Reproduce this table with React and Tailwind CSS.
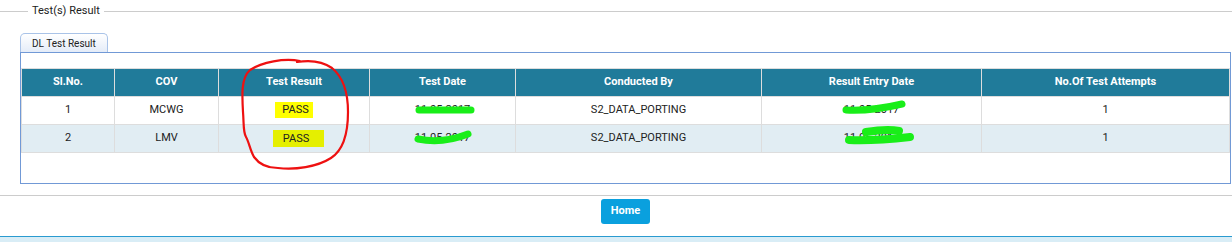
import React from 'react';

const cols = [
  { label: 'Sl.No.', w: 93 },
  { label: 'COV', w: 104 },
  { label: 'Test Result', w: 151 },
  { label: 'Test Date', w: 146 },
  { label: 'Conducted By', w: 246 },
  { label: 'Result Entry Date', w: 220 },
  { label: 'No.Of Test Attempts', w: 248 },
];

const rows = [
  { no: 1, cov: 'MCWG', date: '11-05-2017', by: 'S2_DATA_PORTING', entry: '11-05-2017', attempts: 1 },
  { no: 2, cov: 'LMV', date: '11-05-2017', by: 'S2_DATA_PORTING', entry: '11-05-2017', attempts: 1 },
];

const Annotations = () => (
  <svg
    className="absolute left-0 top-0 pointer-events-none"
    width="1232"
    height="242"
    viewBox="0 0 1232 242"
  >
    {/* red hand drawn circle */}
    <path
      d="M300 61 C284 58 262 62 250 70 C241 78 242 95 243 112 C244 124 243 132 246 137 C249 142 250 150 254 157 C259 164 266 168 278 168 C295 170 317 167 331 158 C345 149 348 131 348 112 C348 92 343 77 332 68 C322 61 309 60 297 62"
      fill="none"
      stroke="#ee1111"
      strokeWidth="2.2"
      strokeLinecap="round"
    />
    {/* green scribbles */}
    <g stroke="#19ee19" strokeLinecap="round" fill="none">
      <path d="M419 110 L471 110" strokeWidth="7" />
      <path d="M418 139 C432 142 450 141 468 134" strokeWidth="7" />
      <path d="M846 110 C866 111 885 108 902 104" strokeWidth="7" />
      <path d="M849 140 C870 141 892 139 910 137" strokeWidth="8" />
      <path d="M866 132 C878 130 890 129 899 131" strokeWidth="8" />
    </g>
  </svg>
);

export default function App() {
  return (
    <div
      className="relative w-[1232px] h-[242px] bg-white text-[#222] overflow-hidden"
      style={{ fontFamily: 'Roboto, "Liberation Sans", Arial, sans-serif' }}
    >
      <fieldset className="border-t border-b border-[#cccccc] pl-[20px] pr-[2px] pb-[11px]">
        <legend className="ml-[8px] px-[4px] text-[11px] leading-[22px] text-[#222]">Test(s) Result</legend>
        <div className="pt-[11px]">
          <div className="w-fit h-[19px] px-[11px] border border-b-0 border-[#a9c3e8] rounded-t-[5px] bg-gradient-to-b from-white to-[#e4ecf8] text-[10px] leading-[19px] text-[#222]">
            DL Test Result
          </div>
          <div className="border border-[#7199d6] pt-[15px] pb-[30px]">
            <table className="w-full border-collapse table-fixed text-[11px]">
              <colgroup>
                {cols.map((c) => (
                  <col key={c.label} style={{ width: c.w }} />
                ))}
              </colgroup>
              <thead>
                <tr className="bg-[#207b9a]">
                  {cols.map((c) => (
                    <th
                      key={c.label}
                      className="h-[28px] p-0 border border-[#dddddd] font-bold text-white text-center"
                    >
                      {c.label}
                    </th>
                  ))}
                </tr>
              </thead>
              <tbody>
                {rows.map((r, i) => (
                  <tr key={r.no} className={i % 2 ? 'bg-[#e1edf3]' : 'bg-white'}>
                    <td className="h-[28px] p-0 border border-[#dddddd] text-center">{r.no}</td>
                    <td className="p-0 border border-[#dddddd] text-center">{r.cov}</td>
                    <td className="p-0 border border-[#dddddd] text-center">
                      {i === 0 ? (
                        <span className="inline-block pl-[7px] pr-[4px] leading-[16px] bg-[#ffff00]">PASS</span>
                      ) : (
                        <span className="inline-block ml-[9px] pl-[10px] pr-[15px] leading-[17px] bg-[#e5ef00]">PASS</span>
                      )}
                    </td>
                    <td className="p-0 border border-[#dddddd] text-center">{r.date}</td>
                    <td className="p-0 border border-[#dddddd] text-center">{r.by}</td>
                    <td className="p-0 border border-[#dddddd] text-center">{r.entry}</td>
                    <td className="p-0 border border-[#dddddd] text-center">{r.attempts}</td>
                  </tr>
                ))}
              </tbody>
            </table>
          </div>
        </div>
      </fieldset>

      <div className="flex justify-center pt-[3px] pl-[19px] h-[40px]">
        <button className="h-[25px] w-[49px] rounded-[3px] bg-[#0aa0de] text-white text-[11px] font-bold">
          Home
        </button>
      </div>
      <div className="h-[6px] border-t border-[#2a9bd0] bg-[#d9edf6]" />

      <Annotations />
    </div>
  );
}
